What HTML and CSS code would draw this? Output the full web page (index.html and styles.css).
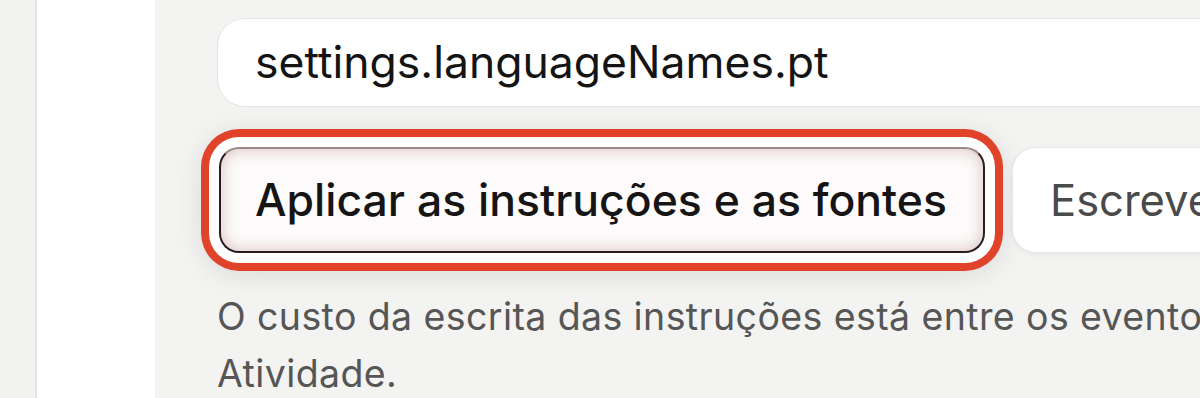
FILE: index.html
```html
<!DOCTYPE html>
<html lang="pt">
<head>
<meta charset="utf-8">
<link rel="stylesheet" href="styles.css">
</head>
<body>
<div class="page">
  <div class="rail"></div>
  <div class="sidebar"></div>
  <main class="main">
    <div class="field">settings.languageNames.pt</div>
    <div class="actions">
      <button class="btn btn-primary">Aplicar as instruções e as fontes</button>
      <button class="btn btn-secondary">Escrever as instruções</button>
    </div>
    <p class="note"><span class="note-line">O custo da escrita das instruções está entre os eventos de uso na página</span> Atividade.</p>
  </main>
</div>
</body>
</html>
```

FILE: styles.css
```css
html, body {
  margin: 0;
  padding: 0;
  width: 1200px;
  height: 398px;
  overflow: hidden;
  background: #f3f3f1;
  font-family: Inter, "Noto Sans", sans-serif;
}
.page {
  display: flex;
  height: 398px;
}
.rail {
  width: 35px;
  flex: none;
  background: #f2f2f0;
  border-right: 2px solid #e2e2e0;
}
.sidebar {
  width: 118px;
  flex: none;
  background: #ffffff;
}
.main {
  flex: 1;
  min-width: 0;
  overflow: hidden;
  padding: 18px 0 0 62px;
  background: #f3f3f1;
}
.field {
  box-sizing: border-box;
  width: 1100px;
  height: 89px;
  background: #ffffff;
  border: 1.5px solid #e4e4e2;
  border-radius: 28px;
  padding-left: 37px;
  padding-bottom: 2px;
  display: flex;
  align-items: center;
  font-size: 44.5px;
  color: #141414;
}
.actions {
  display: flex;
  align-items: center;
  gap: 27px;
  margin-top: 40px;
  width: 1400px;
}
.btn {
  box-sizing: border-box;
  height: 106px;
  font-family: Inter, "Noto Sans", sans-serif;
  white-space: nowrap;
  flex: none;
  text-align: left;
}
.btn-primary {
  width: 766px;
  margin-left: 2px;
  padding: 0 0 0 34px;
  font-size: 44.5px;
  font-weight: 500;
  color: #161414;
  background: #fdfbfb;
  border: 2px solid #2a1c1c;
  border-top-color: #9c8787;
  border-radius: 20px;
  box-shadow:
    inset 0 0 16px rgba(150, 80, 80, 0.35),
    0 0 0 10px #ffffff,
    0 0 0 18px #e0432a,
    0 4px 26px 18px rgba(0, 0, 0, 0.10);
}
.btn-secondary {
  width: 460px;
  padding: 0 0 0 37px;
  font-size: 43.5px;
  font-weight: 400;
  color: #4a4a4a;
  background: #ffffff;
  border: 1.5px solid #e6e6e4;
  border-radius: 24px;
  box-shadow: 0 2px 6px rgba(0, 0, 0, 0.05);
}
.note {
  margin: 35px 0 0 0;
  width: 1300px;
  font-size: 37.5px;
  letter-spacing: 0.4px;
  line-height: 57px;
  color: #565656;
}
.note-line {
  white-space: nowrap;
}
```
